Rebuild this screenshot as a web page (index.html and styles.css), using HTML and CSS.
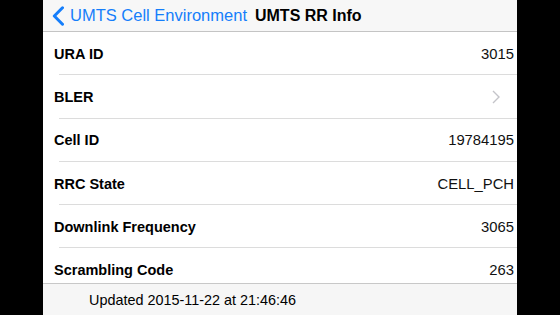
FILE: index.html
```html
<!DOCTYPE html>
<html lang="en">
<head>
  <meta charset="UTF-8" />
  <meta name="viewport" content="width=device-width, initial-scale=1.0"/>
  <title>UMTS RR Info</title>
  <link rel="stylesheet" href="styles.css">
</head>
<body>

  <div class="screen">
    <header class="navbar">
      <a class="back" href="#">
        <svg class="back-icon" width="12" height="20" viewBox="0 0 12 20">
          <path d="M10.5 1.8 L2.3 10 L10.5 18.2" fill="none" stroke="#157efb" stroke-width="3" stroke-linecap="round" stroke-linejoin="round"/>
        </svg>
        <span>UMTS Cell Environment</span>
      </a>
      <h1 class="title">UMTS RR Info</h1>
    </header>

    <div class="list">
      <div class="row"><span class="label">URA ID</span><span class="value">3015</span></div>
      <div class="row"><span class="label">BLER</span>
        <svg class="chevron" width="8" height="14" viewBox="0 0 8 14">
          <path d="M1 1 L7 7 L1 13" fill="none" stroke="#c4c4c9" stroke-width="1.4"/>
        </svg>
      </div>
      <div class="row"><span class="label">Cell ID</span><span class="value">19784195</span></div>
      <div class="row"><span class="label">RRC State</span><span class="value">CELL_PCH</span></div>
      <div class="row"><span class="label">Downlink Frequency</span><span class="value">3065</span></div>
      <div class="row"><span class="label">Scrambling Code</span><span class="value">263</span></div>
    </div>

    <footer class="toolbar">
      <p>Updated 2015-11-22 at 21:46:46</p>
    </footer>
  </div>

</body>
</html>
```

FILE: styles.css
```css
body {
  margin: 0;
  background-color: #000;
  font-family: "Liberation Sans", Arial, sans-serif;
}

.screen {
  width: 474px;
  height: 315px;
  margin: 0 auto;
  background-color: #fff;
  display: flex;
  flex-direction: column;
  overflow: hidden;
}

/* Barra de navegação */
.navbar {
  height: 31px;
  flex-shrink: 0;
  display: flex;
  align-items: center;
  padding-left: 9px;
  background-color: #f7f7f7;
  border-bottom: 1px solid #c4c4c4;
}

.back {
  display: flex;
  align-items: center;
  gap: 6px;
  color: #157efb;
  text-decoration: none;
  font-size: 16.5px;
}

.title {
  margin: 0 0 0 8px;
  font-size: 16px;
  font-weight: bold;
  color: #000;
}

/* Lista */
.list {
  flex: 1;
  overflow: hidden;
}

.row {
  height: 43.3px;
  box-sizing: border-box;
  display: flex;
  align-items: center;
  justify-content: space-between;
  padding: 0 3px 0 11px;
  background: linear-gradient(#dcdcdc, #dcdcdc) 16px 100% / 100% 1px no-repeat;
}

.label {
  font-size: 14.5px;
  font-weight: bold;
  color: #000;
}

.value {
  font-size: 14.8px;
  color: #111;
}

.chevron {
  margin-right: 14px;
}

/* Rodapé */
.toolbar {
  height: 31px;
  flex-shrink: 0;
  display: flex;
  align-items: center;
  padding-left: 46px;
  background-color: #f6f6f6;
  border-top: 1px solid #c8c8c8;
}

.toolbar p {
  margin: 0;
  font-size: 14.4px;
  color: #000;
}
```
